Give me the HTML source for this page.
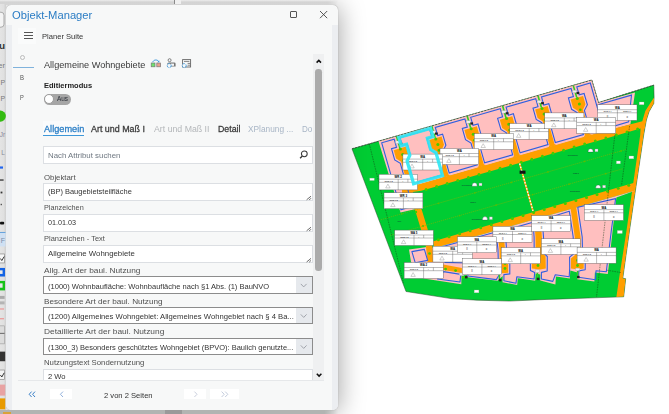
<!DOCTYPE html>
<html lang="de">
<head>
<meta charset="utf-8">
<title>Objekt-Manager</title>
<style>
*{box-sizing:border-box;margin:0;padding:0}
html,body{width:669px;height:414px;overflow:hidden;background:#fff}
body{position:relative;font-family:"Liberation Sans",sans-serif;color:#333}
.abs{position:absolute}
.t{position:absolute;white-space:nowrap;line-height:1;transform-origin:0 0}
#topstrip{left:0;top:0;width:338px;height:5px;background:linear-gradient(#eeeeee 0,#dcdcdc 25%,#d3d3d3 45%,#d5d5d5 100%);-webkit-mask-image:linear-gradient(90deg,#000 97%,transparent)}
#botstrip{left:0;top:410px;width:338px;height:4px;background:#b2b4b2;-webkit-mask-image:linear-gradient(90deg,#000 96%,transparent)}
#leftstrip{left:0;top:4px;width:5.6px;height:406px;background:linear-gradient(90deg,#e4e4e4,#e0e0e0 60%,#cfcfcf)}
#win{left:6px;top:5px;width:332px;height:405px;background:#f7f8f8;border-radius:5px;
 box-shadow:0 0 1px rgba(0,0,0,.4),0 2px 26px 1px rgba(0,0,0,.36)}
.box{position:absolute;left:43px;width:270px;background:#fff;border:1px solid #dcdfe3}
.sel{position:absolute;left:43px;width:270px;background:#fff;border:1px solid #8c8c8c}
.sel .dd{position:absolute;right:0;top:0;bottom:0;width:16.5px;background:#e6e9ed}
.grip{position:absolute;right:1px;bottom:1px}
</style>
</head>
<body>

<svg class="abs" style="left:340px;top:70px" width="329" height="240" viewBox="340 70 329 240" font-family="'Liberation Sans',sans-serif">
<polygon points="352.0,148.8 591.8,80.0 598.5,102.6 653.8,85.1 654.1,97.4 653.8,103.4 649.0,111.8 646.4,120.0 644.8,128.7 643.7,135.0 634.0,200.0 629.6,230.0 622.8,278.2 625.7,278.7 623.7,296.8 600.0,297.6 563.0,298.9 547.0,299.4 509.6,301.1 477.0,300.2 451.0,298.6 406.0,291.5" fill="#00cc33" stroke="#2a4a2a" stroke-width="0.5"/>
<clipPath id="oc"><polygon points="352.0,148.8 591.8,80.0 598.5,102.6 653.8,85.1 654.1,97.4 653.8,103.4 649.0,111.8 646.4,120.0 644.8,128.7 643.7,135.0 634.0,200.0 629.6,230.0 622.8,278.2 625.7,278.7 623.7,296.8 600.0,297.6 563.0,298.9 547.0,299.4 509.6,301.1 477.0,300.2 451.0,298.6 406.0,291.5"/></clipPath><g clip-path="url(#oc)">
<polygon points="378.5,141.2 591.9,80.0 598.4,102.6 635.0,92.4 630.4,124.5 606.6,131.1 412.8,186.6 404.0,190.0 416.0,209.0 400.5,212.5" fill="#ffbfbf" />
<polygon points="402.0,187.5 419.4,184.2 606.4,130.6 642.3,121.3 645.3,111.0 650.7,102.5 654.1,97.4 653.8,103.4 649.0,111.8 646.4,120.0 644.8,128.7 640.4,128.4 608.5,137.8 421.3,190.8 402.0,193.5" fill="#ff9f00" />
<polygon points="644.8,126.0 643.7,135.0 634.0,200.0 629.6,230.0 622.8,278.2 625.7,278.7 623.7,296.8 616.4,296.9 619.0,279.0 626.6,230.0 630.8,200.0 640.2,135.0 640.6,127.0" fill="#ff9f00" />
<polygon points="432.7,241.6 634.3,182.7 634.0,185.2 633.0,191.5 636.4,190.2 434.6,248.1" fill="#ff9f00" />
<polygon points="434.6,248.1 636.4,190.2 616.4,197.5 612.7,230.0 607.8,274.0 594.9,272.6 594.4,281.6 577.2,279.2 577.4,272.5 570.3,270.5 569.8,278.4 555.9,276.4 555.4,284.6 540.2,280.6 540.3,274.5 535.6,273.5 535.2,280.8 517.8,278.3 517.2,285.0 502.5,282.2 502.7,276.0 497.5,280.8 467.3,277.2 466.8,275.0 461.5,275.5 461.3,284.2 423.6,278.5 411.0,262.0 409.0,249.5 427.0,247.0" fill="#ffbfbf" />
<polygon points="404.0,189.0 410.5,187.5 421.8,210.0 427.6,229.0 432.5,247.0 433.0,262.0 427.5,262.0 426.0,247.0 421.0,229.5 415.2,210.5" fill="#ff9f00" />
<polygon points="534.2,220.6 540.6,218.8 541.9,237.0 542.2,253.0 545.6,256.0 545.8,268.5 540.0,269.5 531.8,268.5 531.7,256.0 535.7,253.0 535.5,237.0" fill="#ff9f00" />
<polygon points="570.5,208.0 576.1,206.4 580.6,237.0 581.0,255.0 583.7,258.4 583.7,268.5 578.0,269.5 571.0,268.5 571.0,258.4 575.0,255.0 574.8,237.0" fill="#ff9f00" />
<polygon points="497.5,231.5 503.5,229.8 505.0,250.0 505.3,261.5 508.2,264.2 508.2,272.8 502.0,273.3 502.0,264.2 499.8,261.5 499.5,250.0" fill="#ff9f00" />
<polygon points="443.2,264.4 461.9,267.9 461.9,273.0 443.2,270.0" fill="#ff9f00" />
<polygon points="577.8,207.3 615.6,198.6 611.4,230.0 606.3,271.8 596.0,270.8 595.5,279.8 578.6,277.2 578.8,270.9 585.2,269.8 585.3,257.6 582.6,254.5 582.2,237.0" fill="none" stroke="#2f5fe0" stroke-width="1.1" stroke-linejoin="round"/>
<polygon points="542.2,219.8 569.3,211.2 573.2,237.0 573.4,254.0 569.6,257.2 569.7,268.5 569.2,276.8 555.3,274.8 552.8,281.4 541.4,279.0 541.4,272.4 547.2,271.0 547.3,256.5 543.9,253.3 543.5,237.0" fill="none" stroke="#2f5fe0" stroke-width="1.1" stroke-linejoin="round"/>
<polygon points="505.2,230.2 533.0,222.3 534.1,237.0 534.2,253.2 530.3,256.4 530.4,270.4 534.7,272.6 534.1,279.0 516.8,276.8 516.0,283.2 503.9,280.8 503.9,274.6 509.8,273.9 509.8,263.6 506.9,261.0 506.6,250.0" fill="none" stroke="#2f5fe0" stroke-width="1.1" stroke-linejoin="round"/>
<polygon points="436.5,248.2 496.0,232.0 498.0,250.0 498.3,262.0 500.4,264.8 500.4,273.0 496.3,279.6 467.9,276.0 467.5,263.0 445.0,262.4" fill="none" stroke="#2f5fe0" stroke-width="1.1" stroke-linejoin="round"/>
<polygon points="443.6,271.6 460.8,274.4 460.0,282.0 437.5,279.0" fill="none" stroke="#2f5fe0" stroke-width="1.1" stroke-linejoin="round"/>
<polygon points="411.9,251.6 424.4,249.4 427.6,260.4 415.2,262.7" fill="none" stroke="#2f5fe0" stroke-width="1.1" stroke-linejoin="round"/>
<line x1="380.7" y1="219.8" x2="625.8" y2="149.6" stroke="#86b400" stroke-width="0.55" stroke-dasharray="1.4 0.7"/>
<line x1="390.3" y1="235.4" x2="623.0" y2="168.7" stroke="#86b400" stroke-width="0.55" stroke-dasharray="1.4 0.7"/>
<circle cx="401.8" cy="213.8" r="0.9" fill="#55c000"/>
<circle cx="423.0" cy="226.0" r="0.9" fill="#55c000"/>
<circle cx="438.4" cy="203.3" r="0.9" fill="#55c000"/>
<circle cx="459.6" cy="215.6" r="0.9" fill="#55c000"/>
<circle cx="474.9" cy="192.8" r="0.9" fill="#55c000"/>
<circle cx="496.1" cy="205.1" r="0.9" fill="#55c000"/>
<circle cx="511.4" cy="182.4" r="0.9" fill="#55c000"/>
<circle cx="532.6" cy="194.6" r="0.9" fill="#55c000"/>
<circle cx="547.9" cy="171.9" r="0.9" fill="#55c000"/>
<circle cx="569.1" cy="184.1" r="0.9" fill="#55c000"/>
<circle cx="584.5" cy="161.4" r="0.9" fill="#55c000"/>
<circle cx="605.7" cy="173.7" r="0.9" fill="#55c000"/>
<circle cx="621.0" cy="151.0" r="0.9" fill="#55c000"/>
<circle cx="642.2" cy="163.2" r="0.9" fill="#55c000"/>
<circle cx="426.1" cy="189.6" r="1.5" fill="#44cc00"/>
<circle cx="436.7" cy="186.5" r="1.5" fill="#44cc00"/>
<circle cx="447.2" cy="183.5" r="1.5" fill="#44cc00"/>
<circle cx="457.8" cy="180.5" r="1.5" fill="#44cc00"/>
<circle cx="468.4" cy="177.4" r="1.5" fill="#44cc00"/>
<circle cx="479.0" cy="174.4" r="1.5" fill="#44cc00"/>
<circle cx="489.5" cy="171.4" r="1.5" fill="#44cc00"/>
<circle cx="500.1" cy="168.3" r="1.5" fill="#44cc00"/>
<circle cx="510.7" cy="165.3" r="1.5" fill="#44cc00"/>
<circle cx="521.3" cy="162.3" r="1.5" fill="#44cc00"/>
<circle cx="531.8" cy="159.3" r="1.5" fill="#44cc00"/>
<circle cx="542.4" cy="156.2" r="1.5" fill="#44cc00"/>
<circle cx="553.0" cy="153.2" r="1.5" fill="#44cc00"/>
<circle cx="563.6" cy="150.2" r="1.5" fill="#44cc00"/>
<circle cx="574.1" cy="147.1" r="1.5" fill="#44cc00"/>
<circle cx="584.7" cy="144.1" r="1.5" fill="#44cc00"/>
<circle cx="595.3" cy="141.1" r="1.5" fill="#44cc00"/>
<circle cx="605.9" cy="138.0" r="1.5" fill="#44cc00"/>
<circle cx="616.4" cy="135.0" r="1.5" fill="#44cc00"/>
<circle cx="627.0" cy="132.0" r="1.5" fill="#44cc00"/>
<circle cx="637.6" cy="129.0" r="1.5" fill="#44cc00"/>
<circle cx="648.2" cy="125.9" r="1.5" fill="#44cc00"/>
<circle cx="438.4" cy="239.8" r="1.5" fill="#44cc00"/>
<circle cx="449.0" cy="236.8" r="1.5" fill="#44cc00"/>
<circle cx="459.6" cy="233.8" r="1.5" fill="#44cc00"/>
<circle cx="470.1" cy="230.7" r="1.5" fill="#44cc00"/>
<circle cx="480.7" cy="227.7" r="1.5" fill="#44cc00"/>
<circle cx="491.3" cy="224.7" r="1.5" fill="#44cc00"/>
<circle cx="501.9" cy="221.6" r="1.5" fill="#44cc00"/>
<circle cx="512.4" cy="218.6" r="1.5" fill="#44cc00"/>
<circle cx="523.0" cy="215.6" r="1.5" fill="#44cc00"/>
<circle cx="533.6" cy="212.5" r="1.5" fill="#44cc00"/>
<circle cx="544.2" cy="209.5" r="1.5" fill="#44cc00"/>
<circle cx="554.7" cy="206.5" r="1.5" fill="#44cc00"/>
<circle cx="565.3" cy="203.4" r="1.5" fill="#44cc00"/>
<circle cx="575.9" cy="200.4" r="1.5" fill="#44cc00"/>
<circle cx="586.5" cy="197.4" r="1.5" fill="#44cc00"/>
<circle cx="597.0" cy="194.4" r="1.5" fill="#44cc00"/>
<circle cx="607.6" cy="191.3" r="1.5" fill="#44cc00"/>
<circle cx="618.2" cy="188.3" r="1.5" fill="#44cc00"/>
<circle cx="628.8" cy="185.3" r="1.5" fill="#44cc00"/>
<circle cx="639.3" cy="182.2" r="1.5" fill="#44cc00"/>
<circle cx="649.9" cy="179.2" r="1.5" fill="#44cc00"/>
<circle cx="660.5" cy="176.2" r="1.5" fill="#44cc00"/>
<line x1="519.6" y1="163.5" x2="533" y2="210.9" stroke="#ff9f00" stroke-width="1.7"/>
<line x1="519.6" y1="163.5" x2="533" y2="210.9" stroke="#fff" stroke-width="1.3" stroke-dasharray="1.6 1.6"/>
<rect x="519.6" y="170.6" width="5.9" height="3.2" fill="#111"/>
<line x1="369.3" y1="143.9" x2="403.5" y2="283" stroke="#143a14" stroke-width="0.45" stroke-dasharray="1.6 0.9"/>
<line x1="615.4" y1="130" x2="596.5" y2="297" stroke="#143a14" stroke-width="0.45" stroke-dasharray="1.6 0.9"/>
<line x1="629.6" y1="126" x2="621.5" y2="185.5" stroke="#143a14" stroke-width="0.45" stroke-dasharray="1.6 0.9"/>
<line x1="607" y1="270.2" x2="621" y2="272.6" stroke="#143a14" stroke-width="0.45" stroke-dasharray="1.6 0.9"/>
<path d="M472.0 186.2Q472.0 182.8 474.6 182.8Q477.2 182.8 477.2 186.2Z" fill="#fff" stroke="#234" stroke-width="0.3"/>
<rect x="479.0" y="183.1" width="3" height="2.7" fill="#f4f0f8" stroke="#888" stroke-width="0.3"/>
<path d="M588.0 152.1Q588.0 148.7 590.6 148.7Q593.2 148.7 593.2 152.1Z" fill="#fff" stroke="#234" stroke-width="0.3"/>
<rect x="595.0" y="149.0" width="3" height="2.7" fill="#f4f0f8" stroke="#888" stroke-width="0.3"/>
<path d="M595.6 188.3Q595.6 184.9 598.2 184.9Q600.8 184.9 600.8 188.3Z" fill="#fff" stroke="#234" stroke-width="0.3"/>
<rect x="602.6" y="185.2" width="3" height="2.7" fill="#f4f0f8" stroke="#888" stroke-width="0.3"/>
<path d="M482.4 220.0Q482.4 216.6 485.0 216.6Q487.6 216.6 487.6 220.0Z" fill="#fff" stroke="#234" stroke-width="0.3"/>
<rect x="489.4" y="216.9" width="3" height="2.7" fill="#f4f0f8" stroke="#888" stroke-width="0.3"/>
<rect x="369.8" y="178.1" width="4.5" height="2.4" fill="#fff" stroke="#9a9" stroke-width="0.3"/>
<rect x="616.4" y="161" width="4" height="2.8" fill="#fff" stroke="#9a9" stroke-width="0.3"/>
<rect x="629" y="156" width="4.7" height="2.8" fill="#fff" stroke="#9a9" stroke-width="0.3"/>
<rect x="639.2" y="102" width="4.8" height="2.7" fill="#fff" stroke="#9a9" stroke-width="0.3"/>
<rect x="617.3" y="230.5" width="5" height="3" fill="#fff" stroke="#9a9" stroke-width="0.3"/>
<rect x="474.2" y="290" width="4.7" height="2.8" fill="#fff" stroke="#9a9" stroke-width="0.3"/>
<text x="461.8" y="186.4" font-size="2.1" fill="#123" textLength="10.1" lengthAdjust="spacingAndGlyphs">Streuobstwiese</text>
<text x="470.2" y="203" font-size="2.1" fill="#123" textLength="5.8" lengthAdjust="spacingAndGlyphs">Gehölz 1</text>
<text x="567.8" y="156" font-size="2.1" fill="#123" textLength="10.1" lengthAdjust="spacingAndGlyphs">Streuobstwiese</text>
<text x="573" y="174" font-size="2.1" fill="#123" textLength="5.8" lengthAdjust="spacingAndGlyphs">Gehölz 2</text>
<text x="570" y="192" font-size="2.1" fill="#123" textLength="10.1" lengthAdjust="spacingAndGlyphs">Streuobstwiese</text>
<text x="397.5" y="222" font-size="2.1" fill="#123" textLength="3.6" lengthAdjust="spacingAndGlyphs">Wiese</text>
<text x="403" y="181" font-size="2.1" fill="#123" textLength="3.6" lengthAdjust="spacingAndGlyphs">Weide</text>
<text x="471.8" y="220" font-size="2.1" fill="#123" textLength="10.1" lengthAdjust="spacingAndGlyphs">Streuobstwiese</text>
<circle cx="505.0" cy="263.5" r="1.4" fill="#44cc00"/>
<circle cx="505.0" cy="268.5" r="1.4" fill="#44cc00"/>
<line x1="499.4" y1="274.0" x2="499.4" y2="279.0" stroke="#33cc22" stroke-width="1.5"/>
<rect x="497.29999999999995" y="271.1" width="4.2" height="2.4" fill="#eee" stroke="#999" stroke-width="0.3"/>
<rect x="498.79999999999995" y="278.9" width="2.6" height="2.4" fill="#222"/>
<circle cx="538.0" cy="260.5" r="1.4" fill="#44cc00"/>
<circle cx="538.0" cy="265.5" r="1.4" fill="#44cc00"/>
<line x1="537.4" y1="272.8" x2="537.4" y2="277.8" stroke="#33cc22" stroke-width="1.5"/>
<rect x="535.3" y="269.90000000000003" width="4.2" height="2.4" fill="#eee" stroke="#999" stroke-width="0.3"/>
<rect x="536.8" y="277.7" width="2.6" height="2.4" fill="#222"/>
<circle cx="577.5" cy="260.5" r="1.4" fill="#44cc00"/>
<circle cx="577.5" cy="265.5" r="1.4" fill="#44cc00"/>
<line x1="577.6" y1="271.0" x2="577.6" y2="276.0" stroke="#33cc22" stroke-width="1.5"/>
<rect x="575.5" y="268.1" width="4.2" height="2.4" fill="#eee" stroke="#999" stroke-width="0.3"/>
<rect x="577.0" y="275.9" width="2.6" height="2.4" fill="#222"/>
<circle cx="445.6" cy="269.1" r="1.4" fill="#44cc00"/>
<circle cx="455.6" cy="270.6" r="1.4" fill="#44cc00"/>
<circle cx="429.5" cy="253.5" r="1.3" fill="#44cc00"/>
<circle cx="416.0" cy="212.0" r="1.2" fill="#44cc00"/>
<circle cx="423.0" cy="232.0" r="1.2" fill="#44cc00"/>
<rect x="459.4" y="273" width="4.3" height="2.6" fill="#eee" stroke="#999" stroke-width="0.3"/><rect x="465" y="276" width="2.6" height="2.4" fill="#222"/>
<circle cx="463.2" cy="277.3" r="1.2" fill="#44cc00"/>
<polygon points="393.7,150.2 406.2,146.6 408.6,154.9 406.1,160.3 413.0,184.6 415.2,185.7 406.8,188.1 408.0,186.0 401.1,161.8 396.1,158.5" fill="#ff9f00" />
<polygon points="429.1,140.0 441.6,136.4 444.0,144.8 441.5,150.2 448.4,174.4 450.6,175.6 442.1,178.0 443.4,175.9 436.5,151.6 431.5,148.4" fill="#ff9f00" />
<polygon points="464.4,129.9 476.9,126.3 479.3,134.7 476.8,140.1 483.8,164.3 486.0,165.4 477.5,167.9 478.8,165.7 471.8,141.5 466.8,138.3" fill="#ff9f00" />
<polygon points="499.8,119.8 512.3,116.2 514.7,124.5 512.2,129.9 519.1,154.2 521.3,155.3 512.9,157.7 514.1,155.6 507.2,131.4 502.2,128.1" fill="#ff9f00" />
<polygon points="535.2,109.6 547.7,106.0 550.1,114.4 547.6,119.8 554.5,144.0 556.7,145.2 548.3,147.6 549.5,145.5 542.6,121.2 537.6,118.0" fill="#ff9f00" />
<polygon points="570.6,99.5 583.1,95.9 585.5,104.3 583.0,109.7 589.9,133.9 592.1,135.0 583.6,137.4 584.9,135.3 578.0,111.1 573.0,107.8" fill="#ff9f00" />
<polygon points="413.8,183.1 407.6,161.2 410.5,155.4 407.3,144.2 402.3,145.6 400.0,137.6 429.6,129.1 431.9,137.1 426.9,138.6 430.1,149.8 435.6,153.1 441.9,175.0" fill="none" stroke="#2f5fe0" stroke-width="1.1"/>
<polygon points="449.2,173.0 442.9,151.0 445.9,145.3 442.6,134.1 437.6,135.5 435.3,127.4 464.9,118.9 467.3,127.0 462.3,128.4 465.5,139.7 471.0,143.0 477.3,164.9" fill="none" stroke="#2f5fe0" stroke-width="1.1"/>
<polygon points="484.6,162.8 478.3,140.9 481.2,135.2 478.0,123.9 473.0,125.4 470.7,117.3 500.3,108.8 502.6,116.9 497.6,118.3 500.9,129.5 506.4,132.9 512.7,154.8" fill="none" stroke="#2f5fe0" stroke-width="1.1"/>
<polygon points="520.0,152.7 513.7,130.8 516.6,125.0 513.4,113.8 508.4,115.2 506.1,107.1 535.7,98.7 538.0,106.7 533.0,108.2 536.2,119.4 541.8,122.7 548.0,144.6" fill="none" stroke="#2f5fe0" stroke-width="1.1"/>
<polygon points="555.3,142.5 549.1,120.6 552.0,114.9 548.8,103.6 543.8,105.1 541.5,97.0 571.1,88.5 573.4,96.6 568.4,98.0 571.6,109.3 577.1,112.6 583.4,134.5" fill="none" stroke="#2f5fe0" stroke-width="1.1"/>
<polygon points="400.9,209.7 381.7,142.8 394.2,139.2 396.5,147.3 391.5,148.7 394.7,160.0 400.3,163.3 412.6,206.3" fill="none" stroke="#2f5fe0" stroke-width="1.1"/>
<polygon points="590.7,132.4 584.4,110.5 587.4,104.8 584.1,93.5 579.2,94.9 576.8,86.9 590.3,83.0 603.4,128.8" fill="none" stroke="#2f5fe0" stroke-width="1.1"/>
<polyline points="598.9,104.5 631.5,95.1 628.6,121.9 604.5,129.0 598.9,104.5" fill="none" stroke="#2f5fe0" stroke-width="1.1" />
<line x1="396.5" y1="136.3" x2="399.9" y2="148.1" stroke="#33cc22" stroke-width="1.6"/>
<rect x="395.6" y="140.9" width="4.4" height="2.6" fill="#eee" stroke="#999" stroke-width="0.3"/>
<rect x="399.6" y="142.6" width="2.8" height="2.2" fill="#222"/>
<circle cx="400.4" cy="149.1" r="1.5" fill="#44cc00"/>
<circle cx="402.6" cy="154.6" r="1.5" fill="#44cc00"/>
<circle cx="403.4" cy="160.5" r="1.3" fill="#44cc00"/>
<line x1="431.8" y1="126.1" x2="435.2" y2="137.9" stroke="#33cc22" stroke-width="1.6"/>
<rect x="431.0" y="130.8" width="4.4" height="2.6" fill="#eee" stroke="#999" stroke-width="0.3"/>
<rect x="435.0" y="132.5" width="2.8" height="2.2" fill="#222"/>
<circle cx="435.8" cy="138.9" r="1.5" fill="#44cc00"/>
<circle cx="437.9" cy="144.5" r="1.5" fill="#44cc00"/>
<circle cx="438.8" cy="150.4" r="1.3" fill="#44cc00"/>
<line x1="467.2" y1="116.0" x2="470.6" y2="127.8" stroke="#33cc22" stroke-width="1.6"/>
<rect x="466.4" y="120.6" width="4.4" height="2.6" fill="#eee" stroke="#999" stroke-width="0.3"/>
<rect x="470.3" y="122.4" width="2.8" height="2.2" fill="#222"/>
<circle cx="471.2" cy="128.8" r="1.5" fill="#44cc00"/>
<circle cx="473.3" cy="134.3" r="1.5" fill="#44cc00"/>
<circle cx="474.2" cy="140.2" r="1.3" fill="#44cc00"/>
<line x1="502.6" y1="105.8" x2="506.0" y2="117.7" stroke="#33cc22" stroke-width="1.6"/>
<rect x="501.8" y="110.5" width="4.4" height="2.6" fill="#eee" stroke="#999" stroke-width="0.3"/>
<rect x="505.7" y="112.2" width="2.8" height="2.2" fill="#222"/>
<circle cx="506.6" cy="118.6" r="1.5" fill="#44cc00"/>
<circle cx="508.7" cy="124.2" r="1.5" fill="#44cc00"/>
<circle cx="509.5" cy="130.1" r="1.3" fill="#44cc00"/>
<line x1="538.0" y1="95.7" x2="541.4" y2="107.5" stroke="#33cc22" stroke-width="1.6"/>
<rect x="537.1" y="100.4" width="4.4" height="2.6" fill="#eee" stroke="#999" stroke-width="0.3"/>
<rect x="541.1" y="102.1" width="2.8" height="2.2" fill="#222"/>
<circle cx="542.0" cy="108.5" r="1.5" fill="#44cc00"/>
<circle cx="544.1" cy="114.0" r="1.5" fill="#44cc00"/>
<circle cx="544.9" cy="119.9" r="1.3" fill="#44cc00"/>
<line x1="573.3" y1="85.6" x2="576.7" y2="97.4" stroke="#33cc22" stroke-width="1.6"/>
<rect x="572.5" y="90.2" width="4.4" height="2.6" fill="#eee" stroke="#999" stroke-width="0.3"/>
<rect x="576.5" y="91.9" width="2.8" height="2.2" fill="#222"/>
<circle cx="577.3" cy="98.4" r="1.5" fill="#44cc00"/>
<circle cx="579.4" cy="103.9" r="1.5" fill="#44cc00"/>
<circle cx="580.3" cy="109.8" r="1.3" fill="#44cc00"/>
</g>
<polyline points="352,148.8 591.8,80 598.5,102.6 653.8,85.1" fill="none" stroke="#333" stroke-width="0.6" stroke-dasharray="2 1.2"/>
<g stroke="#555" stroke-width="0.4" fill="none"><rect x="509.8" y="123.5" width="38.8" height="15.8" fill="#fff"/><path d="M509.8 128.5H548.6M509.8 131.6H548.6M529.2 128.5V139.3"/><path d="M538.9 128.5V131.6"/><path d="M516.5 137.3L518.7 133.5L520.9 137.3Z" stroke="#777" stroke-width="0.35"/></g><text x="529.2" y="127.3" font-size="2.9" font-weight="bold" text-anchor="middle" fill="#000">WA</text><text x="519.5" y="131.1" font-size="2.2" text-anchor="middle" fill="#000">GRZ 0,3</text><text x="533.9" y="131.1" font-size="2.2" text-anchor="middle" fill="#000">I</text>
<g stroke="#555" stroke-width="0.4" fill="none"><rect x="474.2" y="133.6" width="39.0" height="16.0" fill="#fff"/><path d="M474.2 138.6H513.2M474.2 141.8H513.2M493.7 138.6V149.6"/><path d="M503.5 138.6V141.8"/><path d="M481.0 147.5L483.2 143.7L485.4 147.5Z" stroke="#777" stroke-width="0.35"/></g><text x="493.7" y="137.4" font-size="2.9" font-weight="bold" text-anchor="middle" fill="#000">WA</text><text x="483.9" y="141.3" font-size="2.2" text-anchor="middle" fill="#000">GRZ 0,3</text><text x="498.4" y="141.3" font-size="2.2" text-anchor="middle" fill="#000">I</text>
<g stroke="#555" stroke-width="0.4" fill="none"><rect x="544.8" y="112.9" width="39.1" height="15.9" fill="#fff"/><path d="M544.8 117.9H583.9M544.8 121.1H583.9M564.3 117.9V128.8"/><path d="M574.1 117.9V121.1"/><path d="M551.6 126.7L553.8 122.9L556.0 126.7Z" stroke="#777" stroke-width="0.35"/></g><text x="564.3" y="116.7" font-size="2.9" font-weight="bold" text-anchor="middle" fill="#000">WA</text><text x="554.6" y="120.6" font-size="2.2" text-anchor="middle" fill="#000">GRZ 0,3</text><text x="569.0" y="120.6" font-size="2.2" text-anchor="middle" fill="#000">I</text>
<g stroke="#555" stroke-width="0.4" fill="none"><rect x="597.7" y="104.8" width="39.3" height="15.6" fill="#fff"/><path d="M597.7 109.7H637.0M597.7 112.8H637.0M617.4 109.7V120.4"/></g><text x="617.4" y="108.5" font-size="2.9" font-weight="bold" text-anchor="middle" fill="#000">WA</text><text x="607.5" y="112.3" font-size="2.2" text-anchor="middle" fill="#000">GFZ 0,4</text><text x="627.2" y="112.3" font-size="2.2" text-anchor="middle" fill="#000">GRZ 0,4</text><text x="607.5" y="117.8" font-size="2.6" text-anchor="middle" fill="#222">II</text><text x="627.2" y="117.8" font-size="2.6" text-anchor="middle" fill="#222">o</text>
<g stroke="#555" stroke-width="0.4" fill="none"><rect x="576.8" y="117.4" width="38.9" height="16.0" fill="#fff"/><path d="M576.8 122.4H615.7M576.8 125.6H615.7M596.2 122.4V133.4"/><path d="M606.0 122.4V125.6"/><path d="M583.5 131.3L585.7 127.5L587.9 131.3Z" stroke="#777" stroke-width="0.35"/></g><text x="596.2" y="121.2" font-size="2.9" font-weight="bold" text-anchor="middle" fill="#000">WA</text><text x="586.5" y="125.1" font-size="2.2" text-anchor="middle" fill="#000">GRZ 0,3</text><text x="600.9" y="125.1" font-size="2.2" text-anchor="middle" fill="#000">I</text>
<g stroke="#555" stroke-width="0.4" fill="none"><rect x="440.0" y="148.5" width="38.7" height="16.0" fill="#fff"/><path d="M440.0 153.5H478.7M440.0 156.7H478.7M459.4 153.5V164.5"/><path d="M469.0 153.5V156.7"/><path d="M446.7 162.4L448.9 158.6L451.1 162.4Z" stroke="#777" stroke-width="0.35"/></g><text x="459.4" y="152.3" font-size="2.9" font-weight="bold" text-anchor="middle" fill="#000">WA</text><text x="449.7" y="156.2" font-size="2.2" text-anchor="middle" fill="#000">GRZ 0,3</text><text x="464.0" y="156.2" font-size="2.2" text-anchor="middle" fill="#000">I</text>
<g stroke="#555" stroke-width="0.4" fill="none"><rect x="402.9" y="154.1" width="39.6" height="15.9" fill="#fff"/><path d="M402.9 159.1H442.5M402.9 162.3H442.5M422.7 159.1V170.0"/><path d="M432.6 159.1V162.3"/><path d="M409.8 167.9L412.0 164.1L414.2 167.9Z" stroke="#777" stroke-width="0.35"/></g><text x="422.7" y="157.9" font-size="2.9" font-weight="bold" text-anchor="middle" fill="#000">WA</text><text x="412.8" y="161.8" font-size="2.2" text-anchor="middle" fill="#000">GRZ 0,3</text><text x="427.5" y="161.8" font-size="2.2" text-anchor="middle" fill="#000">I</text>
<g stroke="#555" stroke-width="0.4" fill="none"><rect x="379.0" y="174.3" width="38.5" height="15.6" fill="#fff"/><path d="M379.0 179.2H417.5M379.0 182.3H417.5M398.2 179.2V189.9"/><path d="M407.9 179.2V182.3"/><path d="M385.7 187.9L387.9 184.1L390.1 187.9Z" stroke="#777" stroke-width="0.35"/></g><text x="398.2" y="178.0" font-size="2.9" font-weight="bold" text-anchor="middle" fill="#000">WR 2</text><text x="388.6" y="181.8" font-size="2.2" text-anchor="middle" fill="#000">GRZ 0,3</text><text x="402.9" y="181.8" font-size="2.2" text-anchor="middle" fill="#000">I</text>
<g stroke="#555" stroke-width="0.4" fill="none"><rect x="384.0" y="192.8" width="38.9" height="15.9" fill="#fff"/><path d="M384.0 197.8H422.9M384.0 201.0H422.9M403.4 197.8V208.7"/><path d="M413.2 197.8V201.0"/><path d="M390.7 206.6L392.9 202.8L395.1 206.6Z" stroke="#777" stroke-width="0.35"/></g><text x="403.4" y="196.6" font-size="2.9" font-weight="bold" text-anchor="middle" fill="#000">WR 3</text><text x="393.7" y="200.5" font-size="2.2" text-anchor="middle" fill="#000">GRZ 0,3</text><text x="408.1" y="200.5" font-size="2.2" text-anchor="middle" fill="#000">I</text>
<g stroke="#555" stroke-width="0.4" fill="none"><rect x="394.7" y="230.1" width="38.7" height="15.4" fill="#fff"/><path d="M394.7 235.0H433.4M394.7 238.0H433.4M414.0 235.0V245.5"/><path d="M423.7 235.0V238.0"/><path d="M401.4 243.6L403.6 239.8L405.8 243.6Z" stroke="#777" stroke-width="0.35"/></g><text x="414.0" y="233.8" font-size="2.9" font-weight="bold" text-anchor="middle" fill="#000">WA 5</text><text x="404.4" y="237.5" font-size="2.2" text-anchor="middle" fill="#000">GRZ 0,3</text><text x="418.7" y="237.5" font-size="2.2" text-anchor="middle" fill="#000">I</text>
<g stroke="#555" stroke-width="0.4" fill="none"><rect x="432.9" y="246.2" width="39.6" height="15.8" fill="#fff"/><path d="M432.9 251.2H472.5M432.9 254.3H472.5M452.7 251.2V262.0"/><path d="M462.6 251.2V254.3"/><path d="M439.8 260.0L442.0 256.2L444.2 260.0Z" stroke="#777" stroke-width="0.35"/></g><text x="452.7" y="250.0" font-size="2.9" font-weight="bold" text-anchor="middle" fill="#000">WA</text><text x="442.8" y="253.8" font-size="2.2" text-anchor="middle" fill="#000">GRZ 0,3</text><text x="457.5" y="253.8" font-size="2.2" text-anchor="middle" fill="#000">I</text>
<g stroke="#555" stroke-width="0.4" fill="none"><rect x="404.1" y="262.5" width="39.1" height="16.0" fill="#fff"/><path d="M404.1 267.5H443.2M404.1 270.7H443.2M423.6 267.5V278.5"/><path d="M433.4 267.5V270.7"/><path d="M410.9 276.4L413.1 272.6L415.3 276.4Z" stroke="#777" stroke-width="0.35"/></g><text x="423.6" y="266.3" font-size="2.9" font-weight="bold" text-anchor="middle" fill="#000">WA 2</text><text x="413.9" y="270.2" font-size="2.2" text-anchor="middle" fill="#000">GRZ 0,3</text><text x="428.3" y="270.2" font-size="2.2" text-anchor="middle" fill="#000">I</text>
<g stroke="#555" stroke-width="0.4" fill="none"><rect x="492.9" y="226.4" width="39.1" height="15.8" fill="#fff"/><path d="M492.9 231.4H532.0M492.9 234.5H532.0M512.5 231.4V242.2"/></g><text x="512.5" y="230.2" font-size="2.9" font-weight="bold" text-anchor="middle" fill="#000">WA</text><text x="502.7" y="234.0" font-size="2.2" text-anchor="middle" fill="#000">GFZ 0,4</text><text x="522.2" y="234.0" font-size="2.2" text-anchor="middle" fill="#000">GRZ 0,4</text><text x="502.7" y="239.6" font-size="2.6" text-anchor="middle" fill="#222">II</text><text x="522.2" y="239.6" font-size="2.6" text-anchor="middle" fill="#222">o</text>
<g stroke="#555" stroke-width="0.4" fill="none"><rect x="457.4" y="236.8" width="38.8" height="15.9" fill="#fff"/><path d="M457.4 241.8H496.2M457.4 245.0H496.2M476.8 241.8V252.7"/></g><text x="476.8" y="240.6" font-size="2.9" font-weight="bold" text-anchor="middle" fill="#000">WA</text><text x="467.1" y="244.5" font-size="2.2" text-anchor="middle" fill="#000">GFZ 0,4</text><text x="486.5" y="244.5" font-size="2.2" text-anchor="middle" fill="#000">GRZ 0,4</text><text x="467.1" y="250.1" font-size="2.6" text-anchor="middle" fill="#222">II</text><text x="486.5" y="250.1" font-size="2.6" text-anchor="middle" fill="#222">o</text>
<g stroke="#555" stroke-width="0.4" fill="none"><rect x="531.7" y="215.6" width="38.8" height="15.9" fill="#fff"/><path d="M531.7 220.6H570.5M531.7 223.8H570.5M551.1 220.6V231.5"/></g><text x="551.1" y="219.4" font-size="2.9" font-weight="bold" text-anchor="middle" fill="#000">WA</text><text x="541.4" y="223.3" font-size="2.2" text-anchor="middle" fill="#000">GFZ 0,4</text><text x="560.8" y="223.3" font-size="2.2" text-anchor="middle" fill="#000">GRZ 0,4</text><text x="541.4" y="228.9" font-size="2.6" text-anchor="middle" fill="#222">II</text><text x="560.8" y="228.9" font-size="2.6" text-anchor="middle" fill="#222">o</text>
<g stroke="#555" stroke-width="0.4" fill="none"><rect x="541.4" y="238.8" width="39.0" height="15.6" fill="#fff"/><path d="M541.4 243.7H580.4M541.4 246.8H580.4M560.9 243.7V254.4"/><path d="M570.6 243.7V246.8"/><path d="M548.2 252.4L550.4 248.6L552.6 252.4Z" stroke="#777" stroke-width="0.35"/></g><text x="560.9" y="242.5" font-size="2.9" font-weight="bold" text-anchor="middle" fill="#000">WA</text><text x="551.1" y="246.3" font-size="2.2" text-anchor="middle" fill="#000">GRZ 0,3</text><text x="565.6" y="246.3" font-size="2.2" text-anchor="middle" fill="#000">I</text>
<g stroke="#555" stroke-width="0.4" fill="none"><rect x="501.2" y="247.6" width="39.0" height="16.1" fill="#fff"/><path d="M501.2 252.7H540.2M501.2 255.9H540.2M520.7 252.7V263.7"/><path d="M530.5 252.7V255.9"/><path d="M508.0 261.6L510.2 257.8L512.4 261.6Z" stroke="#777" stroke-width="0.35"/></g><text x="520.7" y="251.5" font-size="2.9" font-weight="bold" text-anchor="middle" fill="#000">WA</text><text x="510.9" y="255.4" font-size="2.2" text-anchor="middle" fill="#000">GRZ 0,3</text><text x="525.4" y="255.4" font-size="2.2" text-anchor="middle" fill="#000">I</text>
<g stroke="#555" stroke-width="0.4" fill="none"><rect x="462.4" y="258.8" width="39.0" height="16.0" fill="#fff"/><path d="M462.4 263.8H501.4M462.4 267.0H501.4M481.9 263.8V274.8"/></g><text x="481.9" y="262.6" font-size="2.9" font-weight="bold" text-anchor="middle" fill="#000">WA</text><text x="472.1" y="266.5" font-size="2.2" text-anchor="middle" fill="#000">GFZ 0,4</text><text x="491.6" y="266.5" font-size="2.2" text-anchor="middle" fill="#000">GRZ 0,4</text><text x="472.1" y="272.2" font-size="2.6" text-anchor="middle" fill="#222">II</text><text x="491.6" y="272.2" font-size="2.6" text-anchor="middle" fill="#222">o</text>
<g stroke="#555" stroke-width="0.4" fill="none"><rect x="584.3" y="204.7" width="39.2" height="15.7" fill="#fff"/><path d="M584.3 209.6H623.5M584.3 212.8H623.5M603.9 209.6V220.4"/></g><text x="603.9" y="208.5" font-size="2.9" font-weight="bold" text-anchor="middle" fill="#000">WA</text><text x="594.1" y="212.3" font-size="2.2" text-anchor="middle" fill="#000">GFZ 0,4</text><text x="613.7" y="212.3" font-size="2.2" text-anchor="middle" fill="#000">GRZ 0,4</text><text x="594.1" y="217.8" font-size="2.6" text-anchor="middle" fill="#222">II</text><text x="613.7" y="217.8" font-size="2.6" text-anchor="middle" fill="#222">o</text>
<g stroke="#555" stroke-width="0.4" fill="none"><rect x="577.1" y="247.4" width="39.0" height="15.9" fill="#fff"/><path d="M577.1 252.4H616.1M577.1 255.6H616.1M596.6 252.4V263.3"/><path d="M606.4 252.4V255.6"/><path d="M583.9 261.2L586.1 257.4L588.3 261.2Z" stroke="#777" stroke-width="0.35"/></g><text x="596.6" y="251.2" font-size="2.9" font-weight="bold" text-anchor="middle" fill="#000">WA</text><text x="586.9" y="255.1" font-size="2.2" text-anchor="middle" fill="#000">GRZ 0,3</text><text x="601.3" y="255.1" font-size="2.2" text-anchor="middle" fill="#000">I</text>
<polygon points="398.8,137.5 430.5,128.4 432.9,136.6 427.4,138.2 430.6,149.4 436.0,152.8 442.5,175.5 413.6,183.8 407.1,161.1 409.8,155.3 406.6,144.2 401.2,145.7" fill="none" stroke="#33e6f2" stroke-width="3.3" stroke-linejoin="miter" opacity="0.93"/>
</svg>
<div id="win" class="abs"></div>
<div id="topstrip" class="abs"></div>
<div class="abs" style="left:174px;top:0;width:1.2px;height:3.6px;background:#8a8a8a"></div>
<div class="abs" style="left:175.2px;top:0;width:6px;height:4px;background:#f0f0f0"></div>
<div id="botstrip" class="abs"></div>
<div class="abs" style="left:165px;top:410px;width:17px;height:4px;background:#9a9a9a"></div>
<div class="abs" style="left:2.5px;top:411.5px;width:8.5px;height:3px;background:#d8a23a"></div>
<div id="leftstrip" class="abs"></div>
<svg class="abs" style="left:0;top:0" width="5.6" height="414" viewBox="0 0 5.6 414">
 <rect x="-3" y="12" width="7" height="15" rx="3" fill="#f4f4f4" stroke="#999" stroke-width="0.8"/>
 <circle cx="0.3" cy="116" r="5.6" fill="#33bb11"/>
 <rect x="0" y="166.4" width="3" height="2.2" fill="#2266ee"/>
 <rect x="0" y="179.4" width="3.6" height="1.2" fill="#222"/>
 <rect x="0.6" y="191.6" width="1.8" height="1.8" fill="#333"/>
 <rect x="0.6" y="203.8" width="1.4" height="1.4" fill="#555"/>
 <rect x="0" y="221.8" width="4.2" height="2.6" rx="1" fill="#111"/>
 <rect x="0" y="232" width="5.5" height="14.5" fill="#cfe0f3"/>
 <rect x="0" y="232" width="5.5" height="0.9" fill="#5a9bd8"/>
 <rect x="-1" y="254" width="5.6" height="9" fill="#f6f6f6" stroke="#888" stroke-width="0.7"/>
 <path d="M0.4 258.6L1.8 260.6L4.2 256.6" stroke="#222" stroke-width="0.9" fill="none"/>
 <rect x="0" y="268" width="5" height="8.6" fill="#1463e4"/>
 <rect x="0" y="270.4" width="2.6" height="3.6" fill="#e9e9e9"/>
 <rect x="0" y="281" width="5" height="9.5" fill="#18c218"/>
 <rect x="0" y="283.4" width="2.6" height="4.4" fill="#e9e9e9"/>
 <rect x="0" y="296" width="4.6" height="3" fill="#aaa"/>
 <rect x="0" y="301.5" width="4.6" height="3" fill="#b4b4b4"/>
 <rect x="0" y="308.6" width="4" height="1" fill="#e88"/>
 <rect x="0" y="318.4" width="4" height="1" fill="#e88"/>
 <rect x="-1" y="326" width="5.6" height="18" fill="#dcdcdc" stroke="#999" stroke-width="0.6"/>
 <rect x="0" y="333" width="4.6" height="1" fill="#666"/>
 <rect x="0" y="351.8" width="5.2" height="9.6" fill="#333"/>
 <rect x="-1" y="370.2" width="5.6" height="9.6" fill="#f4f4f4" stroke="#888" stroke-width="0.7"/>
 <path d="M0.4 375.2L1.8 377.2L4.2 373" stroke="#222" stroke-width="0.9" fill="none"/>
 <rect x="0" y="384.8" width="5.2" height="11" fill="#e8a3a3"/>
 <rect x="0" y="398.6" width="5.2" height="11" fill="#e89a00"/>
 <g font-family="'Liberation Sans',sans-serif" text-anchor="end">
 <text x="5" y="48.5" font-size="10" font-weight="bold" fill="#333">Zu</text>
 <text x="5" y="67.6" font-size="7.5" fill="#777">ter</text>
 <text x="5.2" y="85" font-size="7" fill="#777">P</text>
 <text x="5.2" y="100.6" font-size="7" fill="#777">P</text>
 <text x="5.2" y="137" font-size="6.5" fill="#889">Jr</text>
 <text x="5" y="155" font-size="6.5" fill="#889">L</text>
 <text x="5" y="243" font-size="7" fill="#7a8ca8">F</text>
 </g>
</svg>

<!-- window inner strips -->
<div class="abs" style="left:6px;top:25px;width:6px;height:385px;background:#eceef1;border-bottom-left-radius:5px"></div>
<div class="abs" style="left:332px;top:25px;width:6px;height:385px;background:#eceef1;border-bottom-right-radius:5px"></div>

<!-- max / close -->
<div class="abs" style="left:289.5px;top:11px;width:7.5px;height:7px;border:1px solid #555;border-radius:1px"></div>
<svg class="abs" style="left:319px;top:10px" width="9" height="9" viewBox="0 0 9 9"><path d="M1 1L8.2 8.2M8.2 1L1 8.2" stroke="#444" stroke-width="0.9" fill="none"/></svg>

<!-- hamburger -->
<div class="abs" style="left:18.4px;top:27.6px;width:17.6px;height:16.8px;background:#fafbfb"></div>
<div class="abs" style="left:23.5px;top:31.6px;width:9.5px;height:1.2px;background:#555"></div>
<div class="abs" style="left:23.5px;top:34.9px;width:9.5px;height:1.2px;background:#555"></div>
<div class="abs" style="left:23.5px;top:38.2px;width:9.5px;height:1.2px;background:#555"></div>

<!-- side tabs -->
<div class="abs" style="left:20px;top:55px;width:5px;height:5px;border:1px solid #bbb;border-radius:50%"></div>
<div class="abs" style="left:13px;top:67px;width:21px;height:1px;background:#7fb2dc"></div>

<!-- toggle -->
<div class="abs" style="left:43.8px;top:93.9px;width:27px;height:10.7px;border-radius:5.4px;background:#a6a6a6"></div>
<div class="abs" style="left:43.5px;top:93.9px;width:10.6px;height:10.6px;border-radius:50%;background:#fff;border:0.8px solid #9c9c9c"></div>

<!-- tabs -->
<div class="abs" style="left:43px;top:121px;width:42px;height:14px;background:#fafbfc"></div>
<div class="abs" style="left:43.4px;top:134.6px;width:40.8px;height:1px;background:#3d97d8"></div>

<!-- search -->
<div class="box" style="top:146px;height:17.5px"></div>
<svg class="abs" style="left:299px;top:150px" width="9" height="9" viewBox="0 0 9 9"><circle cx="5.3" cy="3.8" r="2.9" fill="none" stroke="#3a3a3a" stroke-width="1.05"/><path d="M3.3 6L1.1 8.2" stroke="#333" stroke-width="1.3"/></svg>

<!-- fields -->
<div class="box" style="top:183.4px;height:17.7px"></div>
<div class="box" style="top:214.4px;height:17.6px"></div>
<div class="box" style="top:244.7px;height:18.6px"></div>
<div class="sel" style="top:276.2px;height:18.2px"><div class="dd"></div></div>
<div class="sel" style="top:307.2px;height:17.2px"><div class="dd"></div></div>
<div class="sel" style="top:338.2px;height:17.2px"><div class="dd"></div></div>
<div class="box" style="top:368.5px;height:12px;border-bottom:none"></div>

<!-- scrollbar -->
<div class="abs" style="left:313.2px;top:54px;width:10.8px;height:326.5px;background:#eff0f1"></div>
<div class="abs" style="left:315.4px;top:69px;width:6.5px;height:201.7px;border-radius:3.3px;background:#ababab"></div>

<!-- footer -->
<div class="abs" style="left:18px;top:380px;width:306px;height:1px;background:#e6e8ea"></div>
<div class="abs" style="left:50.3px;top:389.4px;width:22.1px;height:10px;background:#fff"></div>
<div class="abs" style="left:183.8px;top:389.4px;width:22.1px;height:10px;background:#fff"></div>
<div class="abs" style="left:210px;top:389.4px;width:28.8px;height:10px;background:#fff"></div>


<!-- heading icons -->
<svg class="abs" style="left:150px;top:58px" width="44" height="11" viewBox="150 58 44 11">
 <rect x="151.2" y="63" width="3.8" height="3.8" fill="#6ee26e" stroke="#777" stroke-width="0.7"/>
 <rect x="156.8" y="63" width="3.8" height="3.8" fill="#e9a090" stroke="#777" stroke-width="0.7"/>
 <path d="M152.8 62.2C153.2 59.6 157.6 59.2 158.6 61.6" fill="none" stroke="#3a96dc" stroke-width="1"/>
 <path d="M157.4 62.2L159.4 62.2L159.2 60.2Z" fill="#3a96dc"/>
 <circle cx="169.6" cy="60.2" r="1.5" fill="#f7f8f8" stroke="#666" stroke-width="0.8"/>
 <path d="M167.4 66.6V63.6Q167.4 62.4 169.6 62.4H174.2Q175.6 62.4 175.6 63.8V66.6Z" fill="#777"/>
 <rect x="171" y="63.6" width="3" height="2.2" fill="#f7f8f8"/>
 <circle cx="169.2" cy="65.6" r="2" fill="#f7f8f8" stroke="#3a96dc" stroke-width="0.9" stroke-dasharray="2.4 1"/>
 <rect x="182.6" y="59.6" width="8" height="7.4" fill="none" stroke="#666" stroke-width="0.9"/>
 <path d="M184 61.4H189.4M187.6 63.4H190.4M187.6 65.2H190.4" stroke="#666" stroke-width="0.8"/>
 <circle cx="184.2" cy="65.6" r="2" fill="#f7f8f8" stroke="#3a96dc" stroke-width="0.9" stroke-dasharray="2.4 1"/>
</svg>
<!-- scroll arrows -->
<svg class="abs" style="left:313px;top:55px" width="11" height="326" viewBox="313 55 11 326">
 <path d="M316.6 62.6L318.8 60.4L321 62.6" fill="none" stroke="#111" stroke-width="1.5"/>
 <path d="M316.8 373.8L319.1 376.1L321.4 373.8" fill="none" stroke="#111" stroke-width="1.5"/>
</svg>
<!-- footer arrows -->
<svg class="abs" style="left:20px;top:388px" width="225" height="13" viewBox="20 388 225 13">
 <path d="M31.6 391.6L29.2 394.3L31.6 397M35 391.6L32.6 394.3L35 397" fill="none" stroke="#3a80c8" stroke-width="1"/>
 <path d="M63 391.6L60.4 394.3L63 397" fill="none" stroke="#86a8d8" stroke-width="0.9"/>
 <path d="M194.4 391.6L197 394.3L194.4 397" fill="none" stroke="#c4cad8" stroke-width="0.9"/>
 <path d="M221.6 391.6L224.2 394.3L221.6 397M225.2 391.6L227.8 394.3L225.2 397" fill="none" stroke="#bcc6d8" stroke-width="0.9"/>
</svg>
<!-- select chevrons + grips -->
<svg class="abs" style="left:295px;top:180px" width="18" height="175" viewBox="295 180 18 175">
 <g fill="none" stroke="#8e9299" stroke-width="0.8">
 <path d="M300.8 283.9L303.7 286.9L306.6 283.9"/>
 <path d="M300.8 314.4L303.7 317.4L306.6 314.4"/>
 <path d="M300.8 345.4L303.7 348.4L306.6 345.4"/>
 </g>
 <g fill="none" stroke="#444" stroke-width="0.8">
 <path d="M306.6 199.8L311 196.2M309.2 200L311 198.2"/>
 <path d="M306.6 230.8L311 227.2M309.2 231L311 229.2"/>
 <path d="M306.6 262L311 258.4M309.2 262.2L311 260.4"/>
 </g>
</svg>
<div class="t" style="left:11.7px;top:9.92px;font-size:11.2px;color:#2a7cc4;transform:scaleX(1.0010)">Objekt-Manager</div>
<div class="t" style="left:41.9px;top:32.77px;font-size:7.6px;color:#333;transform:scaleX(0.9982)">Planer Suite</div>
<div class="t" style="left:20.2px;top:74.78px;font-size:6.4px;color:#555;transform:scaleX(0.9377)">B</div>
<div class="t" style="left:20.2px;top:95.48px;font-size:6.4px;color:#555;transform:scaleX(0.8908)">P</div>
<div class="t" style="left:43.9px;top:60.63px;font-size:9.3px;color:#3a3a3a;transform:scaleX(0.9816)">Allgemeine Wohngebiete</div>
<div class="t" style="left:43.9px;top:81.90px;font-size:7.8px;color:#222;transform:scaleX(0.9653);font-weight:bold">Editiermodus</div>
<div class="t" style="left:56.8px;top:95.34px;font-size:7.4px;color:#2c3038;transform:scaleX(0.8706)">Aus</div>
<div class="t" style="left:43.7px;top:124.78px;font-size:9.0px;color:#2b7fc6;transform:scaleX(1.0194);-webkit-text-stroke:0.28px #2b7fc6">Allgemein</div>
<div class="t" style="left:91.1px;top:124.78px;font-size:9.0px;color:#3a3a3a;transform:scaleX(0.9884);-webkit-text-stroke:0.28px #3a3a3a">Art und Maß I</div>
<div class="t" style="left:153.5px;top:124.78px;font-size:9.0px;color:#b4b7ba;transform:scaleX(0.9732)">Art und Maß II</div>
<div class="t" style="left:218.0px;top:124.78px;font-size:9.0px;color:#3a3a3a;transform:scaleX(0.9733);-webkit-text-stroke:0.28px #3a3a3a">Detail</div>
<div class="t" style="left:248.0px;top:124.78px;font-size:9.0px;color:#a9b6c6;transform:scaleX(0.9236)">XPlanung ...</div>
<div class="t" style="left:301.7px;top:124.78px;font-size:9.0px;color:#a9b6c6;transform:scaleX(0.8944)">Do</div>
<div class="t" style="left:48.4px;top:151.68px;font-size:7.7px;color:#6e7780;transform:scaleX(1.0206)">Nach Attribut suchen</div>
<div class="t" style="left:43.6px;top:173.70px;font-size:7.8px;color:#505050;transform:scaleX(0.9987)">Objektart</div>
<div class="t" style="left:48.4px;top:187.97px;font-size:7.6px;color:#333;transform:scaleX(0.9826)">(BP) Baugebietsteilfläche</div>
<div class="t" style="left:43.6px;top:204.20px;font-size:7.8px;color:#505050;transform:scaleX(0.9345)">Planzeichen</div>
<div class="t" style="left:48.4px;top:219.17px;font-size:7.6px;color:#333;transform:scaleX(0.9471)">01.01.03</div>
<div class="t" style="left:43.6px;top:235.40px;font-size:7.8px;color:#505050;transform:scaleX(0.9579)">Planzeichen - Text</div>
<div class="t" style="left:48.4px;top:250.27px;font-size:7.6px;color:#333;transform:scaleX(1.0297)">Allgemeine Wohngebiete</div>
<div class="t" style="left:43.6px;top:266.70px;font-size:7.8px;color:#505050;transform:scaleX(1.0641)">Allg. Art der baul. Nutzung</div>
<div class="t" style="left:48.4px;top:282.77px;font-size:7.6px;color:#333;transform:scaleX(0.9917)">(1000) Wohnbaufläche: Wohnbaufläche nach §1 Abs. (1) BauNVO</div>
<div class="t" style="left:43.6px;top:297.50px;font-size:7.8px;color:#505050;transform:scaleX(1.0483)">Besondere Art der baul. Nutzung</div>
<div class="t" style="left:48.4px;top:313.17px;font-size:7.6px;color:#333;transform:scaleX(1.0067)">(1200) Allgemeines Wohngebiet: Allgemeines Wohngebiet nach § 4 Ba...</div>
<div class="t" style="left:43.6px;top:328.20px;font-size:7.8px;color:#505050;transform:scaleX(1.0717)">Detaillierte Art der baul. Nutzung</div>
<div class="t" style="left:48.4px;top:344.37px;font-size:7.6px;color:#333;transform:scaleX(0.9854)">(1300_3) Besonders geschütztes Wohngebiet (BPVO): Baulich genutzte...</div>
<div class="t" style="left:43.6px;top:358.70px;font-size:7.8px;color:#505050;transform:scaleX(0.9984)">Nutzungstext Sondernutzung</div>
<div class="t" style="left:48.4px;top:373.17px;font-size:7.6px;color:#333;transform:scaleX(1.0004)">2 Wo</div>
<div class="t" style="left:103.7px;top:391.60px;font-size:7.8px;color:#333;transform:scaleX(0.9747)">2 von 2 Seiten</div>
</body>
</html>
